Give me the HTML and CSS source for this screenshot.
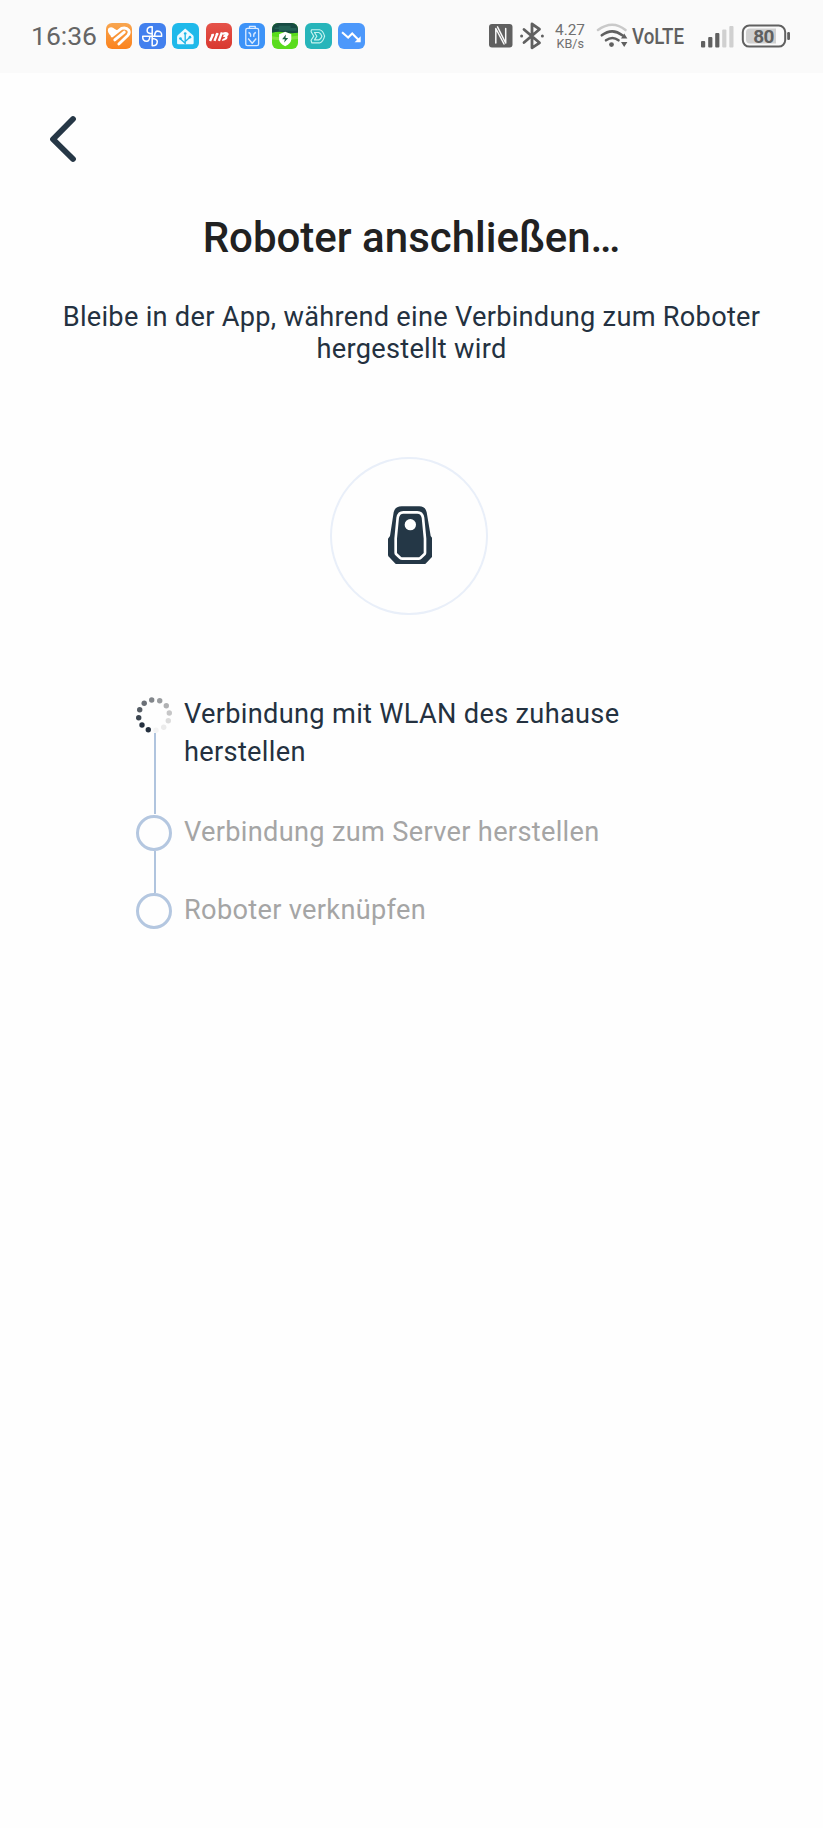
FILE: index.html
```
<!DOCTYPE html>
<html lang="de">
<head>
<meta charset="utf-8">
<title>Roboter anschließen</title>
<link rel="stylesheet" href="styles.css">
</head>
<body>
<header class="status">
  <span class="time">16:36</span>
  <div class="apps">
    <svg class="app orange" viewBox="258 39 78 78"><g fill="none" stroke="#fff" stroke-width="8.500" stroke-linecap="round" stroke-linejoin="round"><path d="M276 77L304 55q14-4 21 5 4 7-2 15L296 101M284 89l28-23"/></g><path d="M264 56q10-9 20 1l8 4-17 18q-14-11-11-23z" fill="#fff"/></svg>
    <svg class="app blue" viewBox="356 39 78 78"><g fill="none" stroke="#fff" stroke-width="4.500" stroke-linejoin="round"><path d="M395 78V50q-15-1-15 12 0 8 15 9"/><path d="M395 78V50q-15-1-15 12 0 8 15 9" transform="rotate(90 395 78)"/><path d="M395 78V50q-15-1-15 12 0 8 15 9" transform="rotate(180 395 78)"/><path d="M395 78V50q-15-1-15 12 0 8 15 9" transform="rotate(270 395 78)"/></g></svg>
    <svg class="app cyan" viewBox="456 39 78 78"><path d="M495 55l23 20q2 2 2 6v18q0 3-3 3h-43q-3 0-3-3V81q0-4 2-6z" fill="#eefaff"/><path d="M495 102V72M495 99l-14-13M495 94l14-13" fill="none" stroke="#1eb6e6" stroke-width="4"/><g fill="#1eb6e6"><circle cx="495" cy="70" r="4"/><circle cx="481" cy="85" r="4"/><circle cx="509" cy="81" r="4"/></g></svg>
    <svg class="app red" viewBox="46 39 78 78"><g fill="none" stroke="#fff" stroke-width="7"><path d="M58 92l9-20M71 92l9-23M84 92l9-25"/><path d="M62 76l7-4M75 74l7-4" stroke-width="5"/></g><path d="M93 69q12-6 18-1 5 5-2 10 4 11-16 14l2-6q7-1 8-5l-7-1 2-5 6-2-9 1z" fill="#fff"/></svg>
    <svg class="app sky" viewBox="145 39 78 78"><g fill="none" stroke="#d9eaff" stroke-width="4" stroke-linejoin="round"><rect x="165" y="55" width="38" height="51" rx="5"/><path d="M176 54v-5h17v5M173 67q8 2 6 13M195 67q-8 2-6 13M172 85l12 14 12-14"/></g></svg>
    <svg class="app green" viewBox="245 39 78 78"><path d="M245 39h78v29q-24 3-39-1-20-4-39 1z" fill="#174b43"/><path d="M265 47h35v7h18v8h-53v-5h-12v-5h12z" fill="#236155"/><path d="M245 78q35 7 78-2v10q-40 6-78 2z" fill="#9be855" opacity=".6"/><path d="M284 65l18 7v15q0 12-18 21-18-9-18-21V72z" fill="#fff"/><path d="M286 73l-11 14h8l-2 10 12-14h-8z" fill="#196342"/></svg>
    <svg class="app teal" viewBox="345 39 78 78"><g fill="none" stroke="#c5f3ef" stroke-width="3.500" stroke-linejoin="round"><path d="M364 59h24q10 2 15 19-5 18-15 20h-23l-2-8 8-12-8-13z"/><path d="M373 67h13q6 2 9 11-3 9-9 11h-13l7-11z"/></g></svg>
    <svg class="app azure" viewBox="444 39 78 78"><path d="M456 66l18 16 12-12 22 22" fill="none" stroke="#fff" stroke-width="6"/><path d="M511 78v18h-18z" fill="#fff"/></svg>
  </div>
  <svg class="system" viewBox="0 0 310 40">
    <!-- NFC -->
    <rect x="1" y="8" width="23.500" height="23.500" rx="3" fill="#606060"/>
    <path d="M7.800 27V12.500L16 28M9.500 10.800L17.700 27V12.500" fill="none" stroke="#fafafa" stroke-width="1.500" stroke-linejoin="round" stroke-linecap="round"/>
    <!-- Bluetooth -->
    <path d="M36.500 13.500L52 26.800l-7.500 5V8l7.500 5.200L36.500 26.500" transform="translate(-.5 0)" fill="none" stroke="#606060" stroke-width="2.800" stroke-linecap="round" stroke-linejoin="round"/><circle cx="33.600" cy="19.900" r="1.500" fill="#606060"/><circle cx="54.400" cy="19.900" r="1.500" fill="#606060"/>
    <!-- Network speed -->
    <text x="82" y="19" class="speed" textLength="30" lengthAdjust="spacingAndGlyphs" text-anchor="middle">4.27</text>
    <text x="82.300" y="31.500" class="speed unit" textLength="27.500" lengthAdjust="spacingAndGlyphs" text-anchor="middle">KB/s</text>
    <!-- Wi-Fi -->
    <g fill="none" stroke-linecap="round" stroke-width="2.600"><path d="M110 14q14.500-10.500 27.500 0" stroke="#c9c9c9"/><path d="M113.800 19.300q10.500-8 20.500 0M118 24.300q6.500-4.600 12.500 0" stroke="#606060"/></g>
    <circle cx="123.500" cy="28.600" r="2.400" fill="#606060"/><path d="M133 22.500l3.200-5 3.200 5zM133 26l3.200 5 3.200-5z" fill="#606060"/>
    <text x="144" y="28" class="volte" textLength="52" lengthAdjust="spacingAndGlyphs">VoLTE</text>
    <!-- Signal -->
    <g fill="#606060"><rect x="213" y="25" width="4.200" height="6.500" rx="1"/><rect x="220.200" y="21" width="4.200" height="10.500" rx="1"/><rect x="227.200" y="17" width="4.200" height="14.500" rx="1"/></g>
    <g fill="#d0d0d0"><rect x="234.200" y="13.500" width="4.200" height="18" rx="1"/><rect x="241.300" y="10" width="4.200" height="21.500" rx="1"/></g>
    <!-- Battery -->
    <rect x="254.800" y="9.600" width="42.400" height="21" rx="6.500" fill="none" stroke="#606060" stroke-width="2"/><path d="M262 12.500h26v15h-26q-4 0-4-4v-7q0-4 4-4z" fill="#d0d0d0"/><rect x="299.200" y="16" width="2.800" height="8" rx="1.200" fill="#606060"/>
    <text x="275.800" y="27" class="charge" text-anchor="middle" textLength="21">80</text>
  </svg>
</header>
<main class="screen">
  <svg class="back" viewBox="0 0 30 50"><path d="M25 5L5 25.200 25 45" fill="none" stroke="#263746" stroke-width="5.800" stroke-linecap="round" stroke-linejoin="round"/></svg>
  <h1 class="title">Roboter anschließen…</h1>
  <p class="hint">Bleibe in der App, während eine Verbindung zum Roboter<br>hergestellt wird</p>
  <div class="ring">
    <svg class="robot" viewBox="203 182 134 176"><path d="M244 183h53q18 0 22 18l12 71 6 8v49q0 4-3 7l-17 18q-2 3-7 3h-79q-5 0-7-3l-17-18q-4-3-4-7v-49l6-8 11-71q4-18 24-18z" fill="#243746"/><path d="M249 201h42q14 0 17 16l6 63v42q0 3-2 5l-11 10q-3 3-7 3h-48q-4 0-7-3l-11-10q-2-2-2-5v-42l6-63q3-16 17-16z" fill="none" stroke="#fff" stroke-width="8"/><circle cx="270" cy="238" r="17" fill="#fff"/></svg>
  </div>
  <ol class="steps">
    <li class="step active">
      <span class="rail"><svg class="spinner" viewBox="136 697 36 36"><g fill="#24303f"><circle cx="148.300" cy="729.700" r="2.700"/><circle cx="142" cy="725" r="2.700"/><circle cx="138.700" cy="717.700" r="2.700" fill="#3c4651"/><circle cx="139.700" cy="709.700" r="2.700" fill="#565d65"/><circle cx="144.200" cy="703.300" r="2.700" fill="#6b7077"/><circle cx="151.700" cy="700" r="2.700" fill="#81858a"/><circle cx="159.700" cy="700.700" r="2.700" fill="#999c9f"/><circle cx="166.300" cy="705.700" r="2.700" fill="#b0b1b3"/><circle cx="169.300" cy="713" r="2.700" fill="#c6c6c7"/><circle cx="168.300" cy="720.700" r="2.700" fill="#dcdcdc"/><circle cx="163.700" cy="727.300" r="2.700" fill="#ebebeb"/><circle cx="156" cy="730.300" r="2.700" fill="#f4f4f4"/></g></svg><i class="line"></i></span>
      <span class="label">Verbindung mit WLAN des zuhause<br>herstellen</span>
    </li>
    <li class="step"><span class="rail"><i class="node"></i><i class="line"></i></span><span class="label">Verbindung zum Server herstellen</span></li>
    <li class="step"><span class="rail"><i class="node"></i></span><span class="label">Roboter verknüpfen</span></li>
  </ol>
</main>
</body>
</html>
```

FILE: styles.css
```
* { box-sizing: border-box; }
body { margin: 0; background: #fefefe; font-family: Roboto, "Liberation Sans", sans-serif; color: #243140; min-height: 1828px; }
.status { height: 73px; background: #fafafa; display: flex; align-items: center; padding: 0 0 1px 31px; }
.time { width: 75px; font-size: 26.500px; line-height: 32px; color: #656565; white-space: nowrap; }
.apps { display: flex; gap: 6.800px; }
.app { width: 26.400px; height: 26.400px; border-radius: 6px; display: block; }
.orange { background: linear-gradient(#f8a650, #fb821d); }
.blue { background: #4280ee; }
.cyan { background: #1fb9ea; }
.red { background: linear-gradient(#e5534a, #d8382f); }
.sky { background: #3d93f8; }
.green { background: #59dc1c; }
.teal { background: #27b5ba; }
.azure { background: #4c98fb; }
.system { width: 310px; height: 40px; margin-left: 123.300px; flex: none; }
.speed { font-size: 15.500px; fill: #707070; }
.unit { font-size: 13.500px; }
.volte { font-size: 21.500px; font-weight: 500; fill: #606060; }
.charge { font-size: 19px; font-weight: 700; fill: #606060; }
.screen { display: flex; flex-direction: column; }
.back { width: 30px; height: 50px; margin: 41px 0 0 48px; }
.title { margin: 49px 0 0; text-align: center; font-size: 42px; line-height: 50px; font-weight: 500; color: #212121; }
.hint { margin: 38px 0 0; text-align: center; font-size: 27.200px; line-height: 32px; letter-spacing: 0.280px; }
.ring { width: 158px; height: 158px; margin: 92px 0 0 330px; border: 2px solid #e9eff9; border-radius: 50%; display: flex; align-items: center; justify-content: center; padding: 0 0 2px 2px; }
.robot { width: 44.700px; height: 58.700px; }
.steps { list-style: none; margin: 80px 0 0; padding: 0 0 0 136px; }
.step { display: flex; gap: 12px; padding-bottom: 40px; font-size: 27.200px; line-height: 38.400px; letter-spacing: 0.310px; color: #a5a5a5; }
.step.active { color: #243140; padding-bottom: 41px; }
.rail { width: 36px; flex: none; display: flex; flex-direction: column; align-items: center; margin: 2px 0 -42px; }
.spinner { width: 36px; height: 36px; flex: none; }
.node { width: 36px; height: 36px; flex: none; border: 3px solid #b4c7e0; border-radius: 50%; }
.line { width: 2px; flex: 1; background: #b0c4de; margin-left: 2px; }
```
